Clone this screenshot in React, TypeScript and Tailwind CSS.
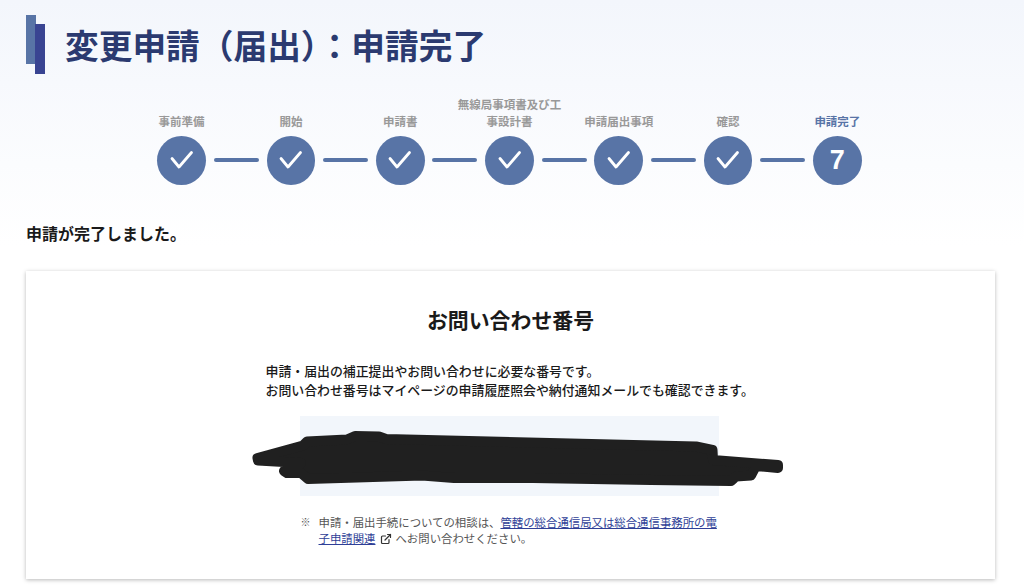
import { ExternalLink } from 'lucide-react'

const steps = [
  { label: '事前準備' },
  { label: '開始' },
  { label: '申請書' },
  { label: '無線局事項書及び工事設計書', wrap: true },
  { label: '申請届出事項' },
  { label: '確認' },
  { label: '申請完了', current: true },
]

function CheckMark() {
  return (
    <svg className="w-[48px] h-[48px]" viewBox="0 0 48 48" fill="none" stroke="currentColor" strokeWidth={2.8} strokeLinecap="round" strokeLinejoin="round">
      <path d="M14 22.5 L21 31 L33.5 16.5" />
    </svg>
  )
}

function Stepper() {
  return (
    <div className="flex flex-col items-center mt-[21.5px] pr-[5px]">
      {/* ラベル */}
      <div className="flex items-end">
        {steps.map((step) => (
          <div
            key={step.label}
            className={`w-[109.3px] text-center text-[11.5px] leading-[17px] font-bold ${
              step.current ? 'text-[#5874a6]' : 'text-[#999999]'
            }`}
          >
            {step.wrap ? (
              <>
                無線局事項書及び工
                <br />
                事設計書
              </>
            ) : (
              step.label
            )}
          </div>
        ))}
      </div>

      {/* 丸と線 */}
      <div className="flex items-center mt-[6.5px]">
        {steps.map((step, i) => (
          <div key={step.label} className="flex items-center">
            <div className="w-[48.6px] h-[48.6px] rounded-full bg-[#5874a6] flex items-center justify-center text-white">
              {step.current ? (
                <span className="text-[27px] font-bold leading-none font-['Liberation_Sans',sans-serif]">7</span>
              ) : (
                <CheckMark />
              )}
            </div>
            {i < steps.length - 1 && (
              <div className="w-[45px] h-[4px] mx-[7.85px] rounded-full bg-[#5874a6]" />
            )}
          </div>
        ))}
      </div>
    </div>
  )
}

export default function App() {
  return (
    <div className="w-[1024px] h-[585px] overflow-hidden bg-gradient-to-b from-[#f3f6fc] to-white to-[42%] px-[26px] pt-[15px] font-['Noto_Sans_CJK_JP',sans-serif] text-[#1a1a1a]">
      {/* タイトル */}
      <div className="flex items-start">
        <div className="relative w-[19px] h-[59px] shrink-0">
          <div className="absolute left-0 top-0 w-[10px] h-[49px] bg-[#5874a6]" />
          <div className="absolute left-[9px] top-[9px] w-[10px] h-[50px] bg-[#394492]" />
        </div>
        <h1 className="ml-[20px] mt-[7px] text-[33.7px] leading-[46px] font-bold text-[#2b3a70]">
          変更申請（届出）：申請完了
        </h1>
      </div>

      <Stepper />

      <p className="mt-[37px] text-[16px] leading-[22px] font-bold">申請が完了しました。</p>

      {/* 完了カード */}
      <div className="mt-[27px] w-[969px] h-[308px] bg-white shadow-[0_1px_4px_rgba(0,0,0,0.28)] flex flex-col items-center pt-[32px]">
        <h2 className="text-[20.9px] leading-[32px] font-bold">お問い合わせ番号</h2>

        <p className="mt-[26px] w-[490px] text-[12.9px] leading-[19px] font-medium whitespace-nowrap">
          申請・届出の補正提出やお問い合わせに必要な番号です。
          <br />
          お問い合わせ番号はマイページの申請履歴照会や納付通知メールでも確認できます。
        </p>

        <div className="relative mt-[17px] w-[419px] h-[80px] -translate-x-[1px] bg-[#f2f6fb]">
          {/* 黒塗り */}
          <svg className="absolute left-[-49px] top-[14px] w-[534px] h-[58px]" viewBox="0 0 534 58" fill="#202020" stroke="#202020" strokeWidth={10} strokeLinejoin="round">
            <path d="M6.5 28 L52 15.5 L56 11.5 L96 9.5 L104 6 L128 6.5 L135 9 L445 16.5 L461.5 20 L462 30 L527 35 L527 38 L505 36 L500 45.5 L485 46.5 L480 51 L400 50 L282 48 L203 48 L171 45.5 L57 49 L50 43 L36 43 L33 41 L36 37 L50 33 L7 30.5 Z" />
          </svg>
        </div>

        <div className="mt-[18px] w-[420px] flex text-[11.4px] leading-[16px] text-[#555555]">
          <span className="w-[18px] shrink-0 text-[10px]">※</span>
          <div className="w-[402px] whitespace-nowrap">
            <div>
              申請・届出手続についての相談は、
              <a href="#" className="text-[#2f3f97] underline">
                管轄の総合通信局又は総合通信事務所の電
              </a>
            </div>
            <div>
              <a href="#" className="text-[#2f3f97] underline">
                子申請関連
              </a>
              <ExternalLink size={12} strokeWidth={2.4} className="inline-block ml-[5px] mr-[3px] text-[#333333] align-[-2px]" />
              へお問い合わせください。
            </div>
          </div>
        </div>
      </div>
    </div>
  )
}
